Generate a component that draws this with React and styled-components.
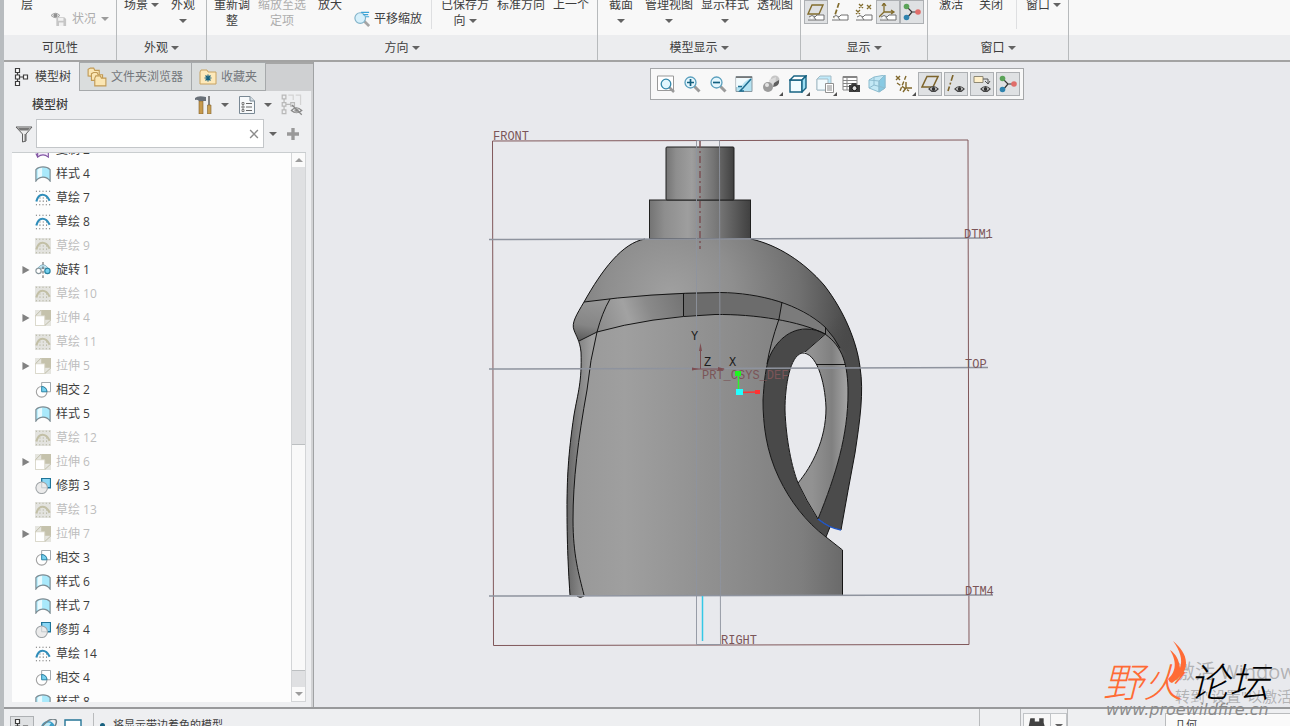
import { useState } from "react"
import styled, { createGlobalStyle, css } from "styled-components"

const treeItems = [
    { type: "copy", name: "复制 2" },
    { type: "style", name: "样式 4" },
    { type: "sketch", name: "草绘 7" },
    { type: "sketch", name: "草绘 8" },
    { type: "sketch", name: "草绘 9", off: true },
    { type: "revolve", name: "旋转 1", children: true },
    { type: "sketch", name: "草绘 10", off: true },
    { type: "extrude", name: "拉伸 4", off: true, children: true },
    { type: "sketch", name: "草绘 11", off: true },
    { type: "extrude", name: "拉伸 5", off: true, children: true },
    { type: "intersect", name: "相交 2" },
    { type: "style", name: "样式 5" },
    { type: "sketch", name: "草绘 12", off: true },
    { type: "extrude", name: "拉伸 6", off: true, children: true },
    { type: "trim", name: "修剪 3" },
    { type: "sketch", name: "草绘 13", off: true },
    { type: "extrude", name: "拉伸 7", off: true, children: true },
    { type: "intersect", name: "相交 3" },
    { type: "style", name: "样式 6" },
    { type: "style", name: "样式 7" },
    { type: "trim", name: "修剪 4" },
    { type: "sketch", name: "草绘 14" },
    { type: "intersect", name: "相交 4" },
    { type: "style", name: "样式 8" },
]

const viewTools = [
    { icon: "refit", label: "重新调整" },
    { icon: "zoomIn", label: "放大" },
    { icon: "zoomOut", label: "缩小" },
    { icon: "repaint", label: "重画" },
    { icon: "render", label: "渲染选项", menu: true },
    { icon: "shading", label: "显示样式", menu: true },
    { icon: "saved", label: "已保存方向", menu: true },
    { icon: "manager", label: "视图管理器" },
    { icon: "perspective", label: "透视图" },
    { icon: "datum", label: "基准显示过滤器", menu: true },
    { icon: "planeEye", label: "平面显示", on: true },
    { icon: "axisEye", label: "轴显示", on: true },
    { icon: "noteEye", label: "注释显示", on: true },
    { icon: "spin", label: "旋转中心", on: true },
]

export default function App() {
    return (
        <Page>
            <GlobalStyle />
            <Ribbon />
            <Work>
                <ModelTreePanel />
                <Viewport>
                    <Model />
                    <ViewToolbar>
                        {viewTools.map((t) =>
                            <ToolButton key={t.icon} $on={t.on} $menu={t.menu} aria-label={t.label}><Icon name={t.icon} size={18} /></ToolButton>
                        )}
                    </ViewToolbar>
                </Viewport>
            </Work>
            <Status />
            <Watermark />
        </Page>
    )
}

function Ribbon() {
    return (
        <RibbonBar>
            <Group $width={113}>
                <GroupBody>
                    <Command>层</Command>
                    <SideCommand disabled><Icon name="status" size={16} />状况 <Arrow $faded /></SideCommand>
                </GroupBody>
                <GroupName>可见性</GroupName>
            </Group>
            <Group $width={90}>
                <GroupBody>
                    <Command><Line>场景<Arrow /></Line><Line /></Command>
                    <Command><Line>外观</Line><Line><Arrow /></Line></Command>
                </GroupBody>
                <GroupName>外观<Arrow /></GroupName>
            </Group>
            <Group $width={391}>
                <GroupBody>
                    <Command><Line>重新调</Line><Line>整</Line></Command>
                    <Command disabled><Line>缩放至选</Line><Line>定项</Line></Command>
                    <Command><Line>放大</Line><Line /></Command>
                    <SideCommand><Icon name="pan" size={16} />平移缩放</SideCommand>
                    <Divider />
                    <Command><Line>已保存方</Line><Line>向<Arrow /></Line></Command>
                    <Command><Line>标准方向</Line><Line /></Command>
                    <Command><Line>上一个</Line><Line /></Command>
                </GroupBody>
                <GroupName>方向<Arrow /></GroupName>
            </Group>
            <Group $width={203}>
                <GroupBody>
                    <Command><Line>截面</Line><Line><Arrow /></Line></Command>
                    <Command><Line>管理视图</Line><Line><Arrow /></Line></Command>
                    <Command><Line>显示样式</Line><Line><Arrow /></Line></Command>
                    <Command><Line>透视图</Line><Line /></Command>
                </GroupBody>
                <GroupName>模型显示<Arrow /></GroupName>
            </Group>
            <Group $width={127}>
                <ToggleBody>
                    <ToolButton $on aria-label="平面标记显示"><Icon name="planeTag" size={18} /></ToolButton>
                    <ToolButton aria-label="轴标记显示"><Icon name="axisTag" size={18} /></ToolButton>
                    <ToolButton aria-label="点标记显示"><Icon name="pointTag" size={18} /></ToolButton>
                    <ToolButton $on aria-label="坐标系标记显示"><Icon name="csysTag" size={18} /></ToolButton>
                    <ToolButton $on aria-label="旋转中心"><Icon name="spin" size={18} /></ToolButton>
                </ToggleBody>
                <GroupName>显示<Arrow /></GroupName>
            </Group>
            <Group $width={141}>
                <GroupBody>
                    <Command><Line>激活</Line><Line /></Command>
                    <Command><Line>关闭</Line><Line /></Command>
                    <Divider />
                    <Command><Line>窗口<Arrow /></Line><Line /></Command>
                </GroupBody>
                <GroupName>窗口<Arrow /></GroupName>
            </Group>
            <RibbonRest />
        </RibbonBar>
    )
}

function ModelTreePanel() {
    const [search, setSearch] = useState("")

    return (
        <Panel>
            <Tabs>
                <Tab $active><Icon name="treeTab" size={18} />模型树</Tab>
                <Tab><Icon name="folders" size={20} />文件夹浏览器</Tab>
                <Tab><Icon name="favorites" size={18} />收藏夹</Tab>
                <TabsRest />
            </Tabs>
            <PanelHead>
                <PanelTitle>模型树</PanelTitle>
                <PlainButton aria-label="设置"><Icon name="tools" size={18} /><Arrow /></PlainButton>
                <PlainButton aria-label="显示"><Icon name="list" size={18} /><Arrow /></PlainButton>
                <PlainButton aria-label="隐藏树" disabled><Icon name="treeHide" size={22} /></PlainButton>
            </PanelHead>
            <SearchRow>
                <Icon name="funnel" size={18} />
                <SearchBox>
                    <input aria-label="搜索" value={search} onChange={(e) => setSearch(e.target.value)} />
                    <PlainButton aria-label="清除" onClick={() => setSearch("")}><Icon name="clear" size={10} /></PlainButton>
                </SearchBox>
                <PlainButton aria-label="搜索选项"><Arrow /></PlainButton>
                <PlainButton aria-label="添加"><Icon name="plus" size={12} /></PlainButton>
            </SearchRow>
            <TreeBox>
                <TreeClip>
                    <TreeList>
                        {treeItems.map((item) =>
                            <TreeRow key={item.name} $off={item.off}>
                                <Expander>{item.children && <Icon name="expand" size={8} />}</Expander>
                                <Icon name={item.type === "sketch" && item.off ? "sketchOff" : item.type} size={16} />
                                {item.name}
                            </TreeRow>
                        )}
                    </TreeList>
                </TreeClip>
                <ScrollBar>
                    <ScrollButton aria-label="向上滚动"><Arrow $up $faded /></ScrollButton>
                    <ScrollTrack><ScrollThumb /></ScrollTrack>
                    <ScrollButton aria-label="向下滚动"><Arrow $faded /></ScrollButton>
                </ScrollBar>
            </TreeBox>
        </Panel>
    )
}

function Status() {
    return (
        <StatusBar>
            <StatusTools>
                <ToolButton $on aria-label="导航器"><Icon name="treeTab" size={18} /></ToolButton>
                <PlainButton aria-label="浏览器"><Icon name="globe" size={18} /></PlainButton>
                <PlainButton aria-label="全屏"><Icon name="screen" size={18} /></PlainButton>
            </StatusTools>
            <Message><Bullet />将显示带边着色的模型</Message>
            <StatusCell />
            <FindCell>
                <FindButton aria-label="查找"><Icon name="find" size={20} /></FindButton>
                <FindButton $narrow aria-label="查找选项"><Arrow /></FindButton>
            </FindCell>
            <FilterCell>
                <FilterSelect aria-label="选择过滤器"><option>几何</option></FilterSelect>
            </FilterCell>
        </StatusBar>
    )
}

function Watermark() {
    return (
        <Mark>
            <Activate>
                <ActivateTitle>激活 Windows</ActivateTitle>
                <ActivateText>转到"设置"以激活 Windows。</ActivateText>
            </Activate>
            <Logo><LogoFire>野火</LogoFire><span>论坛</span></Logo>
            <Flame viewBox="0 0 22 44">
                <path d="M6 0 C13 6 19 13 19 22 C19 32 12 37 5 42 Q2 41 1 38 C8 32 11 22 3 9 C9 13 12 19 13 27 C16 19 13 9 6 0Z" fill="#ff6b35" />
            </Flame>
            <Site>www.proewildfire.cn</Site>
        </Mark>
    )
}

/* bottle drawn in window coordinates */
function Model() {
    const body = "M645 239 C622 243 602 270 584 302 C577 314 571 323 574 330 C576 336 580 341 581 352 C582 382 578 392 574 415 C568 455 567 480 567 510 C567 550 569 580 570 595 L842 595 L842 550 L826 537 C806 522 790 501 779 478 C766 451 763 424 763 400 C764 384 765 373 768 361 C773 345 787 329 806 329 C814 329 820 331 825 334 L842 357 L860 367 C857 343 845 312 824 285 C804 262 778 245 751 239Z"
    return (
        <Drawing viewBox="314 62 976 645" role="img" aria-label="模型">
            <defs>
                <linearGradient id="cyl">
                    <stop offset="0" stopColor="#747474" />
                    <stop offset=".15" stopColor="#8e8e8e" />
                    <stop offset=".38" stopColor="#9e9e9e" />
                    <stop offset=".7" stopColor="#747474" />
                    <stop offset="1" stopColor="#404040" />
                </linearGradient>
                <linearGradient id="bodyFill" gradientUnits="userSpaceOnUse" x1="570" y1="0" x2="843" y2="0">
                    <stop offset="0" stopColor="#989898" />
                    <stop offset=".2" stopColor="#9f9f9f" />
                    <stop offset=".6" stopColor="#8c8c8c" />
                    <stop offset=".85" stopColor="#7e7e7e" />
                    <stop offset="1" stopColor="#6a6a6a" />
                </linearGradient>
                <radialGradient id="dome" gradientUnits="userSpaceOnUse" cx="670" cy="295" r="185">
                    <stop offset="0" stopColor="#a0a0a0" />
                    <stop offset=".35" stopColor="#8e8e8e" />
                    <stop offset=".7" stopColor="#707070" />
                    <stop offset="1" stopColor="#464646" />
                </radialGradient>
                <linearGradient id="bandLeft" gradientUnits="userSpaceOnUse" x1="600" y1="330" x2="683" y2="300">
                    <stop offset="0" stopColor="#8c8c8c" />
                    <stop offset=".35" stopColor="#a2a2a2" />
                    <stop offset=".6" stopColor="#8a8a8a" />
                    <stop offset="1" stopColor="#757575" />
                </linearGradient>
                <linearGradient id="lip" gradientUnits="userSpaceOnUse" x1="590" y1="300" x2="582" y2="342">
                    <stop offset="0" stopColor="#969696" />
                    <stop offset=".6" stopColor="#858585" />
                    <stop offset="1" stopColor="#585858" />
                </linearGradient>
                <linearGradient id="edge" gradientUnits="userSpaceOnUse" x1="567" y1="0" x2="592" y2="0">
                    <stop offset="0" stopColor="#666" />
                    <stop offset=".5" stopColor="#858585" />
                    <stop offset="1" stopColor="#a0a0a0" />
                </linearGradient>
                <linearGradient id="handle" gradientUnits="userSpaceOnUse" x1="826" y1="325" x2="852" y2="350">
                    <stop offset="0" stopColor="#4b4b4b" stopOpacity="0" />
                    <stop offset="1" stopColor="#4b4b4b" />
                </linearGradient>
                <linearGradient id="grip" gradientUnits="userSpaceOnUse" x1="812" y1="0" x2="848" y2="0">
                    <stop offset="0" stopColor="#929292" />
                    <stop offset=".55" stopColor="#808080" />
                    <stop offset="1" stopColor="#a6a6a6" />
                </linearGradient>
            </defs>

            <path d="M492.500 141 L968 140 L969 644.500 L493.500 645.500Z" fill="none" stroke="#80585b" />

            <path d={body} fill="url(#bodyFill)" />
            {/* shoulder */}
            <path d="M645 239 C622 243 602 270 584 302 Q650 293 720 292.500 C760 293 800 304 825 327 Q835 338 840 348 L860 367 C857 343 845 312 824 285 C804 262 778 245 751 239Z" fill="url(#dome)" />
            <path d="M584 302 C577 314 571 323 574 330 L579 341 L597 332 Q602 313 610 299Z" fill="url(#lip)" />
            <path d="M610 299 Q648 294 683 293 L683 316 Q640 321 597 332 Q602 313 610 299Z" fill="url(#bandLeft)" />
            <path d="M683 293 C722 291 756 294 782 302 L779 319 C748 314 716 314 683 316Z" fill="#6c6c6c" />
            <path d="M782 302 C800 307 815 317 825 327 L825 334 Q808 325 779 319Z" fill="#7b7b7b" />
            <path d="M579 341 L597 332 Q590 360 587 390 C578 440 573 480 573 520 C573 555 579 575 584 595 L570 595 C569 580 567 550 567 510 C567 480 568 455 574 415 C578 392 582 382 581 352Z" fill="url(#edge)" />
            {/* handle */}
            <path d="M825 327 C840 345 848 365 848 393 C848 435 836 475 818 519 L830 527 L841 530 Q848 490 855 453 C860 420 864 392 860 367 C857 343 845 312 824 285Z" fill="url(#handle)" />
            <path d="M763 400 C764 384 765 373 768 361 C773 345 787 329 806 329 C814 329 820 331 825 334 L805 352 L802 353 C790 356 785 385 785 410 C786 440 792 468 798 483 Q806 500 818 519 L830 527 L826 537 C806 522 790 501 779 478 C766 451 763 424 763 400Z" fill="#494949" />
            <path d="M805 352 L825 334 C843 347 848 365 848 393 C848 435 836 475 818 519 Q806 502 798 483 C812 466 826 440 826 408 C825 385 819 360 805 352Z" fill="url(#grip)" />
            <path d="M802 353 C790 356 785 385 785 410 C786 440 792 468 798 483 C812 466 826 440 826 408 C825 380 816 352 802 353Z" fill="#e8e9ed" />

            <g fill="none" stroke="#141414">
                <path d="M645 239 C622 243 602 270 584 302 C577 314 571 323 574 330 C576 336 580 341 581 352 C582 382 578 392 574 415 C568 455 567 480 567 510 C567 550 569 580 570 595" />
                <path d="M751 239 C778 245 804 262 824 285 C845 312 857 343 860 367 C864 392 860 420 855 453 Q848 490 841 530" />
                <path d="M842.500 595 L842.500 550 L826 537 C806 522 790 501 779 478 C766 451 763 424 763 400 C764 384 765 373 768 361 C773 345 787 329 806 329 C814 329 820 331 825 334 C843 347 848 365 848 393 C848 435 836 475 818 519" />
                <path d="M802 353 C790 356 785 385 785 410 C786 440 792 468 798 483 C812 466 826 440 826 408 C825 380 816 352 802 353Z" />
                <path d="M798 483 Q806 500 818 519 M830 527 L826 537" />
                <path d="M584 302 Q650 293 720 292.500 C760 293 800 304 825 327 Q835 338 840 348" />
                <path d="M579 341 L597 332 Q650 317 715 314.500 C755 314 800 321 825 334" />
                <path d="M610 299 Q602 313 597 332 Q590 360 587 390 C578 440 573 480 573 520 C573 555 579 575 584 595" />
                <path d="M683.500 293 V316 M782 302 L779 319 Q770 345 767 364 M825.500 327 V334 L805 352 M817 364.500 H845" />
            </g>
            <path d="M577 596 Q580 599 584 596" fill="#555" stroke="#333" />
            <path d="M818 519 Q829 528 841 530" fill="none" stroke="#1e55c8" strokeWidth="1.500" />

            <g stroke="#202020">
                <rect x="649.500" y="200" width="101" height="38.500" fill="url(#cyl)" />
                <rect x="666" y="147" width="68" height="53" rx="1" fill="url(#cyl)" />
            </g>

            <g fill="none" stroke="#8e939e">
                <path d="M489 239.500 L988 238" strokeWidth="1.500" />
                <path d="M489 369 L988 367.500" strokeWidth="1.500" />
                <path d="M489 596 L993 595" strokeWidth="1.500" />
                <path d="M696.500 141 V644.500 H720.500 L719.500 140.500 H696.500" strokeOpacity=".9" />
            </g>
            <path d="M700 141 V249" stroke="#7b5255" strokeWidth="1.500" strokeDasharray="7 3 2 3" />
            <path d="M702.500 596 V641" stroke="#35c8e6" strokeWidth="1.500" />

            <g stroke="#7d4e52" fill="#7d4e52">
                <path d="M700.500 369 V346 M694 369 H724" fill="none" />
                <path d="M700.500 343 L702 351 H699Z M725 369 L718 367 V371Z M692 367.500 L699 369 L692 370.500Z" stroke="none" />
            </g>
            <DatumText x="493" y="140">FRONT</DatumText>
            <DatumText x="964" y="238">DTM1</DatumText>
            <DatumText x="965" y="368">TOP</DatumText>
            <DatumText x="965" y="595">DTM4</DatumText>
            <DatumText x="721" y="644">RIGHT</DatumText>
            <DatumText x="702" y="379">PRT_CSYS_DEF</DatumText>
            <AxisText x="691" y="340">Y</AxisText>
            <AxisText x="704" y="366">Z</AxisText>
            <AxisText x="729" y="366">X</AxisText>

            <path d="M738.500 374 V392" stroke="#2cf32c" strokeWidth="1.500" />
            <path d="M740 392.500 L757 392" stroke="#f33" strokeWidth="1.500" />
            <rect x="735" y="371" width="6" height="5" fill="#1ff51f" />
            <rect x="755" y="390" width="5" height="4" fill="#f33" />
            <rect x="736" y="389" width="7" height="6" fill="#2ff" />
        </Drawing>
    )
}

const eye = (x, y) => <g transform={`translate(${x} ${y})`}><path d="M0 3 Q4.500 -2 9 3 Q4.500 8 0 3Z" fill="#fff" stroke="#444" strokeWidth="1.200" /><circle cx="4.500" cy="3" r="2" fill="#333" /></g>
const tag = <path d="M2 14 Q5 11 8 14 L10 12 H17 V17 H9 M1 17 H9 L7 14" fill="#fff" stroke="#707070" />
const lens = <><path d="M11.500 11.500 L16.500 16.500" stroke="#9a9a9a" strokeWidth="3" /><circle cx="7.500" cy="7.500" r="5.500" fill="#e4f6fd" stroke="#5a9fbd" strokeWidth="1.300" /></>
const dots = "M1 1.500 H17 M1 16.500 H17 M5 9 H14 M5 12.500 H14"

const icons = {
    status: <g opacity=".7"><path d="M0 5 Q5 0 10 5 Q5 10 0 5Z" fill="#ddd" stroke="#777" /><circle cx="5" cy="5" r="2.200" fill="#666" /><path d="M6 7 H15 L17 9 V17 H6Z" fill="#b2b2b2" /><path d="M8 8 H14 V11 H8Z M9 13 H14 V17 H9Z" fill="#efefef" /></g>,
    pan: <><path d="M11 11 L17 17" stroke="#a5a5a5" strokeWidth="3" /><circle cx="7" cy="8" r="6" fill="#d6f0fb" stroke="#82b3c9" strokeWidth="1.300" /><path d="M8 1.500 H17 M10 4 H16 M13 6.500 H17" stroke="#3aa5d8" strokeWidth="1.300" /></>,
    planeTag: <><path d="M5 2 H16 L12 11 H1Z" fill="none" stroke="#836d2e" strokeWidth="1.400" />{tag}</>,
    axisTag: <><path d="M8 0 L3 15" stroke="#836d2e" strokeWidth="1.700" strokeDasharray="5 2" />{tag}</>,
    pointTag: <><path d="M4 1 L8 5 M8 1 L4 5 M12 2 L16 6 M16 2 L12 6 M1 7 L5 11 M5 7 L1 11" stroke="#836d2e" strokeWidth="1.300" />{tag}</>,
    csysTag: <><path d="M5 1 V9 H14 M5 9 L0 14 M3 3 L5 0 L7 3 M12 7 L15 9 L12 11" fill="none" stroke="#836d2e" strokeWidth="1.300" />{tag}</>,
    spin: <><path d="M4 4 L9 9 L4 15 M9 9 H15" fill="none" stroke="#333" strokeWidth="1.200" /><circle cx="3.500" cy="3.500" r="2.800" fill="#5ba359" /><circle cx="3.500" cy="14.500" r="2.800" fill="#2f83ae" /><circle cx="15" cy="9" r="2.800" fill="#e06d69" /></>,
    treeTab: <path d="M2.500 .5 H6.500 V4.500 H2.500Z M2.500 7 H6.500 V11 H2.500Z M2.500 13.500 H6.500 V17.500 H2.500Z M10.500 7 H14.500 V11 H10.500Z M6.500 9 H10.500 M4.500 4.500 V7 M4.500 11 V13.500" fill="#fff" stroke="#3d3d3d" strokeWidth="1.200" />,
    folders: <g fill="#fbe6b3" stroke="#c19a55"><path d="M1 8 V2 L3 1 H6 L7 3 H11 V9Z" /><path d="M4 12 V6 L6 5 H9 L10 7 H14 V12Z" /><path d="M7 17 V10 L8 8 H12 L13 10 H17 V17Z" /></g>,
    favorites: <><path d="M1 16 V4 L2 2 H8 L9 4 H17 V16Z" fill="#fde9ba" stroke="#c7a260" /><path d="M9 6.500 V13.500 M5.500 10 H12.500 M6.500 7.500 L11.500 12.500 M11.500 7.500 L6.500 12.500" stroke="#15617f" strokeWidth="1.200" /></>,
    tools: <><path d="M4 5 H8 V18 H4Z" fill="#c79a4d" stroke="#80602c" strokeWidth=".6" /><path d="M0 2 Q3 -1 11 1 V5 H4 Q2 3 0 4Z" fill="#697078" /><path d="M14 0 V9" stroke="#777" strokeWidth="1.800" /><path d="M12.500 9 H16 V18 H12.500Z" fill="#c9a154" stroke="#80602c" strokeWidth=".6" /></>,
    list: <><path d="M1.500 .5 H12 L16.500 5 V17.500 H1.500Z" fill="#f7f9fb" stroke="#798894" /><path d="M12 .5 V5 H16.500" fill="#d5dee5" stroke="#798894" /><path d="M8 7.500 H14 M8 11 H14 M8 14.500 H14" stroke="#666" /><path d="M4 6.500 H6 V8.500 H4Z M4 10 H6 V12 H4Z M4 13.500 H6 V15.500 H4Z" fill="none" stroke="#666" strokeWidth=".8" /></>,
    treeHide: <g fill="none" stroke="#b9b9b9"><path d="M1 1 H4 V4 H1Z M1 7 H4 V10 H1Z M1 13 H4 V16 H1Z M4 8.500 H8 M8 7 H11 V10 H8Z M2.500 4 V7 M2.500 10 V13" /><path d="M6 1 H10 V5 M12 1 H16 V9" stroke="#d3d3d3" /><path d="M8.500 13.500 Q12.500 9 17 13.500 Q12.500 17 8.500 13.500Z" stroke="#888" /><circle cx="12.700" cy="13.400" r="1.500" fill="#888" /><path d="M9 9 L17 17" stroke="#888" /></g>,
    funnel: <><path d="M1 2 H17 L11 9 V16 L7.500 17 V9Z" fill="#ececec" stroke="#5e5e5e" /><path d="M9.500 9 L11 9 V16 L9.500 16.500Z M3 3 H15 L13 5.500 H5Z" fill="#777" /></>,
    clear: <path d="M2 2 L16 16 M16 2 L2 16" stroke="#8b8b8b" strokeWidth="2.500" />,
    plus: <path d="M9 0 V18 M0 9 H18" stroke="#999" strokeWidth="5" />,
    expand: <path d="M1 0 L17 9 L1 18Z" fill="#828282" />,
    copy: <path d="M3 1 V17 Q9 12 15 17 V1 M1 13 L3 17 L6 15" fill="#f4eafb" stroke="#8256a3" strokeWidth="1.300" />,
    style: <><path d="M1 4 Q4 1 9 1 Q14 1 17 4 V17 Q14 12.500 9 12.500 Q4 12.500 1 17Z" fill="#a9e9fb" stroke="#7c8b92" strokeWidth="1.300" /><path d="M3 4 Q5 2.500 8 2 V11.500 Q5 12 3 13.500Z" fill="#e9fafe" /></>,
    sketch: <><path d={dots} stroke="#6c6c6c" strokeWidth="1.200" strokeDasharray="1.200 2.500" /><path d="M1.500 13 C4 3 12 3 16.500 12" fill="none" stroke="#2f8dba" strokeWidth="2.400" /></>,
    sketchOff: <><path d="M0 0 H18 V18 H0Z" fill="#e3e3df" /><path d={dots} stroke="#b2b29c" strokeWidth="1.200" strokeDasharray="1.200 2.500" /><path d="M1.500 13 C4 3 12 3 16.500 12" fill="none" stroke="#c2bfa6" strokeWidth="2.400" /></>,
    revolve: <><path d="M3 7 Q9 -1 15 7Z" fill="#c1e6f3" stroke="#83acbb" /><path d="M9 0 V18" stroke="#444" strokeDasharray="3 2" /><circle cx="4" cy="10" r="3" fill="#fff" stroke="#88969c" strokeWidth="1.300" /><circle cx="14" cy="10" r="3" fill="#75d0ee" stroke="#29829f" strokeWidth="1.300" /></>,
    extrude: <><path d="M0 0 H18 V18 H0Z" fill="#e5e5df" /><path d="M7 0 H18 V11 H7Z" fill="#c5c2ac" /><path d="M.5 6.500 H11 V17.500 H.5Z" fill="#fff" stroke="#d6d4c6" /><path d="M.5 6.500 L7 0 M11 17.500 L18 11" stroke="#bbb9a4" /></>,
    intersect: <><path d="M7.500 .5 H17.500 V11 H7.500Z" fill="#fff" stroke="#939b9f" /><circle cx="7.500" cy="11" r="6" fill="#fff" fillOpacity=".6" stroke="#a1a1a1" strokeWidth="1.200" /><path d="M7.500 5 V11 H13.500 Q13 5.500 7.500 5Z" fill="#77d1ef" stroke="#207ea3" /></>,
    trim: <><path d="M7.500 .5 H17.500 V11 H7.500Z" fill="#8ad7f5" stroke="#1f7599" strokeWidth="1.500" /><circle cx="7.500" cy="11" r="6.500" fill="#ebebeb" stroke="#a0a5a8" strokeWidth="1.200" /><path d="M7.500 5 V11 H13.500" fill="none" stroke="#c0c7ca" /></>,
    refit: <><path d="M.5 1 H16.500 V15.500 H.5Z" fill="#fff" stroke="#999" /><path d="M12 12 L17 17" stroke="#999" strokeWidth="2.500" /><circle cx="9" cy="9" r="4.800" fill="#e2f6fd" stroke="#3387aa" strokeWidth="1.300" /></>,
    zoomIn: <>{lens}<path d="M4 7.500 H11 M7.500 4 V11" stroke="#126080" strokeWidth="1.700" /></>,
    zoomOut: <>{lens}<path d="M4 7.500 H11" stroke="#126080" strokeWidth="1.700" /></>,
    repaint: <><path d="M1 1.500 H17 V16.500 H1Z" fill="#b5e3f2" stroke="#8a9aa2" /><path d="M1 3 H16 Q9 6 6 12 L1 12Z" fill="#fff" opacity=".8" /><path d="M1 1.500 H17 V3 H1Z" fill="#777" /><path d="M3 11.500 H7 M16 4 L8 13 L5 16 H9" fill="none" stroke="#1f6f92" strokeWidth="1.500" /></>,
    render: <><circle cx="13" cy="5" r="4.500" fill="#c5c5c5" /><path d="M7 5 L14 2 L13 10 L8 12Z" fill="#dcdcdc" /><path d="M17 5 Q18 11 11 12 L12 8Z" fill="#5f5f5f" /><circle cx="6" cy="12" r="5" fill="#9b9b9b" /><circle cx="5" cy="10" r="2" fill="#e3e3e3" /></>,
    shading: <g stroke="#176382" strokeWidth="1.400"><path d="M1 5 H13 V17 H1Z" fill="#f0fcff" /><path d="M1 5 L5 1 H17 L13 5Z" fill="#fff" /><path d="M13 5 L17 1 V13 L13 17Z" fill="#9adef3" /></g>,
    saved: <><path d="M1 4 L4 1 H15 V10 H9 V15 H1Z" fill="#c0eafa" stroke="#a5bcc6" /><path d="M1 4 H12 V15 H1Z" fill="#f2fafd" stroke="#a5bcc6" /><path d="M9.500 8.500 H17.500 V17.500 H9.500Z" fill="#fff" stroke="#909090" /><path d="M11 11 H16 M11 13 H16 M11 15 H16" stroke="#888" /></>,
    manager: <><path d="M1 1.500 H15 V15 H1Z" fill="#fff" stroke="#858585" /><path d="M1 2.500 H15 M1 5.500 H15 M1 8.500 H15 M1 11.500 H15 M5 1 V15" stroke="#858585" /><path d="M7 10 H9 L10 8 H14 L15 10 H18 V17 H7Z" fill="#3d3d3d" /><circle cx="12.500" cy="13.200" r="2.500" fill="#ddd" stroke="#111" /></>,
    perspective: <g stroke="#8dbccf"><path d="M1 5 L6 2 L17 0 V13 L11 17 L1 13Z" fill="#c3e8f5" /><path d="M11 6 L17 0 V13 L11 17Z" fill="#88cae3" /><path d="M1 5 L11 6 M11 6 V17 M6 2 V10 L1 13 M6 10 L17 13" fill="none" /></g>,
    datum: <g fill="none" stroke="#80682c" strokeWidth="1.400"><path d="M1 1 L5 5 M5 1 L1 5" /><path d="M11 1 L5 16 M2 8 L14 16" strokeDasharray="4 2" /><path d="M11 7 V13 H17 M11 13 L8 17" /></g>,
    planeEye: <><path d="M6 1.500 H17 L12 12 H1Z" fill="none" stroke="#7d642b" strokeWidth="1.500" />{eye(8, 11)}</>,
    axisEye: <><path d="M6 0 L1 16" stroke="#7d642b" strokeWidth="1.600" strokeDasharray="6 2 2 2" />{eye(8, 11)}</>,
    noteEye: <><path d="M1 1.500 H10 V7.500 H1Z" fill="#fff0ca" stroke="#8e8875" /><path d="M10 4 H15 V9 M12 6 L15 9 L17 6" fill="none" stroke="#555" />{eye(8, 11)}</>,
    globe: <><circle cx="8" cy="9" r="7" fill="#3c9fc8" /><path d="M3 8 Q6 2 11 4 L8 9Z" fill="#bde9f6" /><path d="M0 10 Q10 -3 16 1 Q18 5 10 13" fill="none" stroke="#76848a" strokeWidth="1.500" /></>,
    screen: <path d="M1 1 H17 V15 H1Z" fill="#fff" stroke="#267697" strokeWidth="1.400" />,
    find: <path d="M3 2 H7 V5 H11 V2 H15 V6 L17 13 V17 H11 V11 H7 V17 H1 V12Z" fill="#424242" />,
}

function Icon({ name, size }) {
    return <Svg viewBox="0 0 18 18" width={size} height={size} aria-hidden="true">{icons[name]}</Svg>
}

const GlobalStyle = createGlobalStyle`
    * {
        box-sizing: border-box;
    }
    body {
        margin: 0;
        background-color: #eeeff1;
        color: #3e3e3e;
        font: 12px/16px "Open Sans", "Noto Sans CJK SC", sans-serif;
    }
    button, input, select {
        font: inherit;
        color: inherit;
    }
    button {
        padding: 0;
        border: 0;
        background: none;
    }
`
const Svg = styled.svg`
    flex: none;
    display: block;
`
const Page = styled.div`
    position: relative;
    height: 100vh;
    overflow: hidden;
    display: flex;
    flex-direction: column;
    border-left: 4px solid #b8bcbf;
`
const RibbonBar = styled.header`
    display: flex;
    flex: none;
    border-bottom: 2px solid #a3a3a3;
`
const Group = styled.section`
    width: ${props => props.$width}px;
    flex: none;
    border-right: 1px solid #b7babc;
`
const GroupBody = styled.div`
    height: 35px;
    display: flex;
    align-items: flex-end;
    gap: 8px;
    padding: 0 7px 6px;
    background-color: #f8f8f8;
    overflow: hidden;
    white-space: nowrap;
`
const ToggleBody = styled(GroupBody)`
    align-items: flex-start;
    gap: 0;
    padding: 0 3px;
`
const GroupName = styled.div`
    height: 25px;
    display: flex;
    align-items: center;
    justify-content: center;
    gap: 3px;
    background-color: #ecedef;
`
const RibbonRest = styled.div`
    flex: 1;
    background: linear-gradient(#f8f8f8 35px, #ecedef 35px);
`
const Command = styled.button`
    min-width: 32px;
    height: 32px;
    flex: none;
    display: flex;
    flex-direction: column;
    align-items: center;
    &:disabled {
        color: #adadad;
    }
`
const Line = styled.span`
    height: 16px;
    display: flex;
    align-items: center;
    gap: 3px;
`
const SideCommand = styled.button`
    height: 20px;
    flex: none;
    display: flex;
    align-items: center;
    gap: 4px;
    &:disabled {
        gap: 5px;
        color: #adadad;
    }
`
const Divider = styled.span`
    width: 1px;
    height: 32px;
    flex: none;
    margin: 0 1px;
    background-color: #dedfe1;
`
const Arrow = styled.i`
    flex: none;
    border: 4px solid transparent;
    border-top-color: ${props => (props.$faded ? "#9c9c9c" : "#636363")};
    border-bottom-width: 0;
    ${props => props.$up && css`
        transform: rotate(180deg);
    `}
`
const ToolButton = styled.button`
    position: relative;
    width: ${props => (props.$menu ? 25 : 24)}px;
    height: 24px;
    flex: none;
    display: flex;
    align-items: center;
    justify-content: center;
    ${props => props.$on && css`
        background-color: #dfe1e3;
        border: 1px solid #adb0b3;
    `}
    ${props => props.$menu && css`
        &::after {
            content: "";
            position: absolute;
            right: 0;
            bottom: 0;
            border: 2px solid #505050;
            border-top-color: transparent;
            border-left-color: transparent;
        }
    `}
`
const Work = styled.main`
    flex: 1;
    min-height: 0;
    display: flex;
`
const Panel = styled.aside`
    width: 310px;
    flex: none;
    display: flex;
    flex-direction: column;
    background-color: #eeeff1;
    border-right: 1px solid #a0a2a4;
    box-shadow: inset -2px 0 #d2d3d5;
    padding-bottom: 5px;
`
const Tabs = styled.div`
    height: 29px;
    flex: none;
    display: flex;
`
const Tab = styled.button`
    display: flex;
    align-items: center;
    gap: 4px;
    padding: 0 8px 0 7px;
    background-color: #dadddd;
    color: #74777c;
    border: solid #a6a9ab;
    border-width: 1px 1px 1px 0;
    ${props => props.$active && css`
        padding: 0 8px 0 9px;
        background-color: #eeeff1;
        color: #3e3e3e;
        border-width: 0 1px 0 0;
    `}
`
const TabsRest = styled.div`
    flex: 1;
    background-color: #cfd0d2;
    border-top: 2px solid #a6a6a6;
`
const PanelHead = styled.div`
    height: 28px;
    flex: none;
    display: flex;
    align-items: center;
    gap: 9px;
    padding: 0 10px 0 28px;
`
const PanelTitle = styled.h1`
    flex: 1;
    margin: 0;
    font-size: 12px;
    font-weight: 500;
`
const PlainButton = styled.button`
    flex: none;
    display: flex;
    align-items: center;
    gap: 8px;
`
const SearchRow = styled.div`
    height: 29px;
    flex: none;
    display: flex;
    align-items: center;
    padding: 0 14px 0 11px;
    gap: 5px;
    margin-bottom: 4px;
    & > ${PlainButton}:last-child {
        margin-left: 5px;
    }
`
const SearchBox = styled.div`
    flex: 1;
    height: 29px;
    display: flex;
    align-items: center;
    padding-right: 4px;
    margin-left: -2px;
    background-color: #fff;
    border: 1px solid #c3c6c9;
    input {
        flex: 1;
        min-width: 0;
        border: 0;
        outline: 0;
        background: none;
    }
`
const TreeBox = styled.div`
    flex: 1;
    min-height: 0;
    display: flex;
    margin: 0 7px 0 8px;
    background-color: #fdfdfd;
    border-top: 1px solid #c9cdcf;
`
const TreeClip = styled.div`
    flex: 1;
    overflow: hidden;
`
/* the list is scrolled by part of its first row */
const TreeList = styled.ul`
    margin: -15px 0 0;
    padding: 0;
    list-style: none;
`
const TreeRow = styled.li`
    height: 24px;
    display: flex;
    align-items: center;
    gap: 5px;
    padding-left: 8px;
    color: ${props => (props.$off ? "#bdbdbd" : "#3c3c3c")};
`
const Expander = styled.span`
    width: 10px;
    display: flex;
    justify-content: flex-end;
`
const ScrollBar = styled.div`
    width: 15px;
    display: flex;
    flex-direction: column;
    border: 1px solid #d3d5d7;
    border-top: 0;
`
const ScrollButton = styled.button`
    height: 14px;
    display: flex;
    align-items: center;
    justify-content: center;
    background-color: #fafafa;
`
const ScrollTrack = styled.div`
    flex: 1;
    display: flex;
    flex-direction: column;
    justify-content: flex-end;
    padding-bottom: 16px;
    background-color: #dfe0e2;
`
const ScrollThumb = styled.div`
    height: 45%;
    background-color: #f9f9f9;
    border: solid #bcbfc1;
    border-width: 1px 0;
`
const Viewport = styled.section`
    position: relative;
    flex: 1;
    min-width: 0;
    background-color: #e8e9ed;
`
const Drawing = styled.svg`
    display: block;
    width: 100%;
    height: 100%;
`
const DatumText = styled.text`
    font: 12px "Liberation Mono", monospace;
    fill: #7b5558;
`
const AxisText = styled(DatumText)`
    fill: #1c1c1c;
`
const ViewToolbar = styled.div`
    position: absolute;
    top: 6px;
    left: 336px;
    display: flex;
    gap: 2px;
    padding: 3px;
    background-color: #f8f8f8;
    border: 1px solid #a5a7a9;
`
const StatusBar = styled.footer`
    height: 19px;
    flex: none;
    display: flex;
    align-items: flex-start;
    background-color: #eeeff1;
    border-top: 2px solid #98999b;
    overflow: hidden;
`
const StatusTools = styled.div`
    height: 30px;
    display: flex;
    align-items: center;
    gap: 6px;
    margin-top: 4px;
    padding: 0 11px 0 6px;
    border-right: 1px solid #b9bbbd;
`
const Message = styled.p`
    flex: 1;
    display: flex;
    align-items: center;
    gap: 8px;
    margin: 8px 0 0 6px;
    font-size: 11px;
`
const Bullet = styled.i`
    width: 5px;
    height: 5px;
    border-radius: 50%;
    background-color: #17607f;
`
const StatusCell = styled.div`
    width: 42px;
    height: 30px;
    border: solid #b9bbbd;
    border-width: 0 1px;
`
const FindCell = styled.div`
    height: 30px;
    display: flex;
    padding: 4px 0 0 2px;
    border-right: 1px solid #b9bbbd;
`
const FindButton = styled.button`
    width: ${props => (props.$narrow ? 16 : 28)}px;
    height: 26px;
    display: flex;
    align-items: center;
    justify-content: center;
    background-color: #f8f8f8;
    border: 1px solid #c1c4c7;
    & + & {
        border-left: 0;
    }
`
const FilterCell = styled.div`
    width: 222px;
    padding: 4px 0 0 97px;
`
const FilterSelect = styled.select`
    width: 160px;
    height: 24px;
    padding: 0 9px;
    font-size: 11px;
    appearance: none;
    background-color: #fafafa;
    border: 1px solid #b9bbbd;
    border-radius: 0;
`
/* overlay in the window corner */
const Mark = styled.div`
    position: absolute;
    right: 0;
    bottom: 0;
    width: 187px;
    height: 90px;
    overflow: hidden;
    white-space: nowrap;
    pointer-events: none;
`
const Activate = styled.div`
    position: absolute;
    left: 72px;
    top: 22px;
    color: rgba(110, 110, 110, .45);
`
const ActivateTitle = styled.div`
    font-size: 20px;
    line-height: 28px;
`
const ActivateText = styled.div`
    font-size: 15px;
    line-height: 20px;
`
const Logo = styled.div`
    position: absolute;
    left: 0;
    top: 20px;
    display: flex;
    gap: 6px;
    font-family: "Noto Sans CJK SC", sans-serif;
    font-size: 40px;
    font-weight: 300;
    font-style: italic;
    line-height: 48px;
    color: #000;
`
const LogoFire = styled.span`
    color: #ff6b35;
`
const Flame = styled.svg`
    position: absolute;
    left: 64px;
    top: 5px;
    width: 22px;
    height: 44px;
`
const Site = styled.div`
    position: absolute;
    left: 3px;
    top: 64px;
    font: italic 16px/20px "DejaVu Sans", sans-serif;
    color: #8b8b8b;
`
